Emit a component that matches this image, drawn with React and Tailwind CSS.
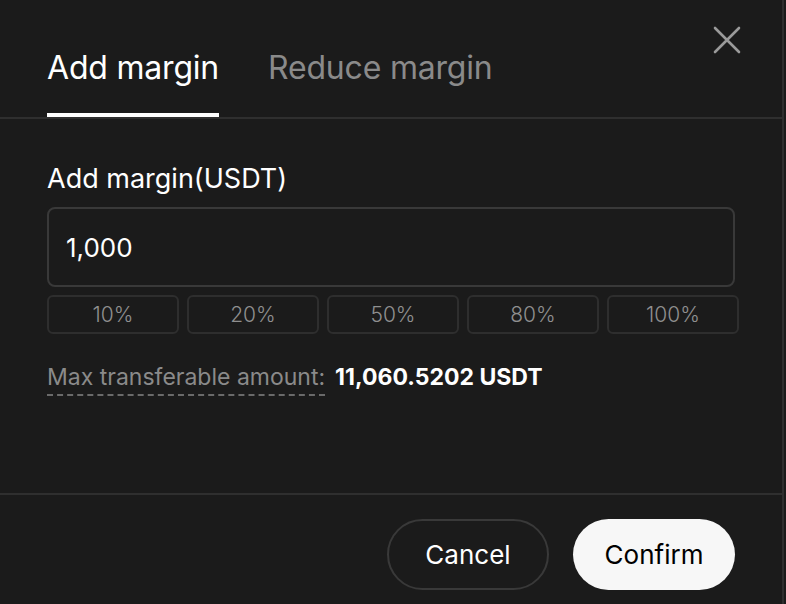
import { useState } from 'react'

const PRESETS = ['10%', '20%', '50%', '80%', '100%']

export default function App() {
  const [tab, setTab] = useState('add')

  return (
    <div
      className="w-[786px] h-[604px] bg-[#1b1b1b] flex overflow-hidden"
      style={{ fontFamily: 'Inter, "Noto Sans", sans-serif' }}
    >
      <div className="w-[784px] h-full border-r-2 border-[#2f2f2f] flex flex-col">
        {/* Header tabs */}
        <div className="relative h-[119px] border-b-2 border-[#2f2f2f] flex items-end px-[47px] gap-[49px] shrink-0">
          <button onClick={() => setTab('add')} className="flex flex-col items-stretch">
            <span className={`text-[32px] leading-[40px] tracking-[-0.2px] ${tab === 'add' ? 'text-white' : 'text-[#8a8a8a]'}`}>
              Add margin
            </span>
            <span className={`mt-[25px] h-[4px] ${tab === 'add' ? 'bg-white' : 'bg-transparent'}`} />
          </button>
          <button onClick={() => setTab('reduce')} className="flex flex-col items-stretch">
            <span className={`text-[32px] leading-[40px] tracking-[-0.2px] ${tab === 'reduce' ? 'text-white' : 'text-[#8a8a8a]'}`}>
              Reduce margin
            </span>
            <span className={`mt-[25px] h-[4px] ${tab === 'reduce' ? 'bg-white' : 'bg-transparent'}`} />
          </button>

          <button className="absolute top-[24px] right-[39px] w-[32px] h-[32px] flex items-center justify-center text-[#9a9a9a]">
            <svg viewBox="0 0 28 28" width="28" height="28" fill="none" stroke="currentColor" strokeWidth="2.6" strokeLinecap="round">
              <path d="M2 2 L26 26 M26 2 L2 26" />
            </svg>
          </button>
        </div>

        {/* Body */}
        <div className="flex-1 px-[47px] pt-[44px] flex flex-col">
          <label className="text-[27px] leading-[32px] text-white">Add margin(USDT)</label>

          <div className="mt-[12px] w-[688px] h-[80px] rounded-lg border-2 border-[#393939] flex items-center px-[17px]">
            <input
              defaultValue="1,000"
              className="w-full bg-transparent outline-none text-[26px] text-white"
            />
          </div>

          <div className="mt-[8px] w-[692px] grid grid-cols-5 gap-[8px]">
            {PRESETS.map(p => (
              <button
                key={p}
                className="h-[39px] rounded-md border-2 border-[#2e2e2e] text-[21px] text-[#8f8f8f] font-light flex items-center justify-center"
              >
                {p}
              </button>
            ))}
          </div>

          <div className="mt-[28px] flex items-start gap-[10px] text-[23px] leading-[30px]">
            <span className="text-[#8a8a8a] border-b-2 border-dashed border-[#6a6a6a] pb-[2px]">
              Max transferable amount:
            </span>
            <span className="text-white font-bold">11,060.5202 USDT</span>
          </div>
        </div>

        {/* Footer */}
        <div className="h-[111px] border-t-2 border-[#2f2f2f] flex justify-end items-start gap-[24px] pt-[24px] pr-[47px] shrink-0">
          <button className="w-[162px] h-[71px] rounded-full border-2 border-[#393939] text-white text-[26px]">
            Cancel
          </button>
          <button className="w-[162px] h-[71px] rounded-full bg-[#f7f7f7] text-black text-[26px]">
            Confirm
          </button>
        </div>
      </div>
    </div>
  )
}
